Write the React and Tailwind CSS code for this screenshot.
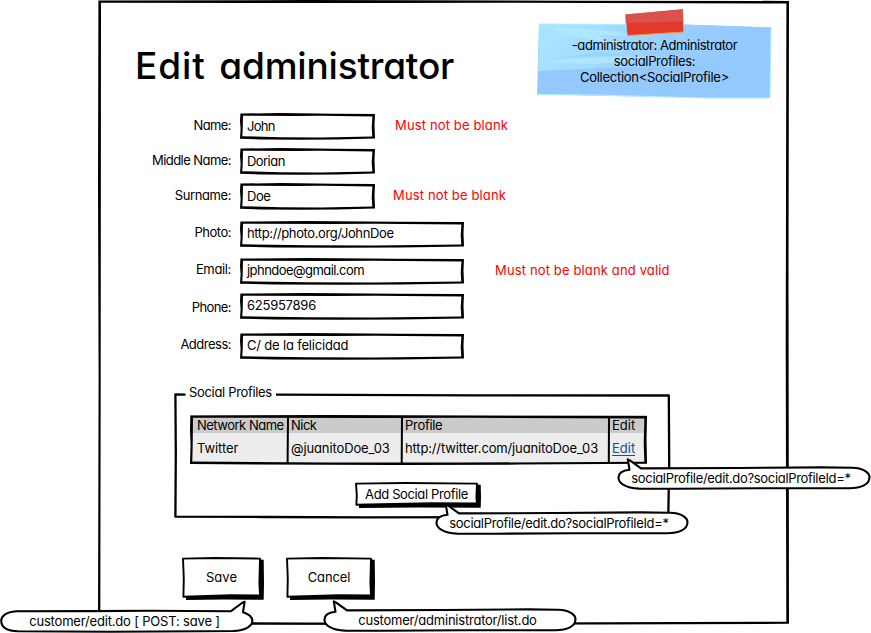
// Hand-drawn rectangle outline: an uneven ring between an outer and an inner edge.
function SketchBorder({ w, h }) {
  const t = 2.7;
  const outer = `M0.4 0.6 L${w * 0.3} 0 L${w * 0.7} 0.7 L${w} 0.9 L${w - 0.5} ${h * 0.45} L${w} ${h - 1.2} L${w * 0.72} ${h - 0.4} L${w * 0.45} ${h} L${w * 0.15} ${h - 0.4} L0 ${h - 1} L0.6 ${h * 0.6} L0 ${h * 0.3} Z`;
  const inner = `M${t + 0.3} ${t + 0.1} L${t} ${h * 0.6} L${t - 0.4} ${h - t - 0.9} L${w * 0.3} ${h - t + 0.2} L${w * 0.6} ${h - t + 0.3} L${w - t} ${h - t - 0.6} L${w - t - 0.6} ${h * 0.55} L${w - t + 0.1} ${t + 0.8} L${w * 0.6} ${t} L${w * 0.4} ${t + 0.3} Z`;
  return (
    <svg className="pointer-events-none absolute left-0 top-0 overflow-visible" width={w} height={h}>
      <path d={outer + ' ' + inner} fill="#000" fillRule="evenodd" />
    </svg>
  );
}

function Field({ label, labelClass, value, valueClass, wide, error, errorClass, className }) {
  return (
    <div className={`flex h-[26px] items-center ${className}`}>
      <div className={`w-[131px] text-right ${labelClass}`}>{label}</div>
      <div className={`relative ml-[9px] flex h-[26px] shrink-0 items-center pl-[7px] ${wide ? 'w-[224px]' : 'w-[135px]'}`}>
        <SketchBorder w={wide ? 224 : 135} h={26.8} />
        <span className={valueClass}>{value}</span>
      </div>
      {error && <div className={`pb-[2px] text-[#ff0000] ${errorClass}`}>{error}</div>}
    </div>
  );
}

function SketchButton({ w, h, children, className, textClass }) {
  return (
    <button className={`relative flex items-center justify-center ${className}`}>
      <svg className="absolute left-0 top-0 overflow-visible" width={w} height={h}>
        <path d={`M4 ${h - 6} L${w - 6} 2.5 L${w - 0.3} 2.7 L${w} ${h * 0.6} L${w - 0.3} ${h - 0.2} L${w * 0.5} ${h - 0.4} L4 ${h} Z`} fill="#000" />
        <path d={`M1 1.6 L${w * 0.4} 1 L${w - 4} 1.6 L${w - 4.6} ${h * 0.6} L${w - 4} ${h - 4.6} L${w * 0.6} ${h - 4.9} L1.4 ${h - 3.3} L1.8 ${h * 0.5} Z`} fill="#fff" stroke="#000" strokeWidth="1.9" strokeLinejoin="round" />
      </svg>
      <span className={`relative ${textClass}`}>{children}</span>
    </button>
  );
}

// Speech bubble whose tail rises from its left or its right end.
function Callout({ tailRight, className, children }) {
  const left = 'M12.5 12.8 L10.8 2.4 L13.2 3.6 L24 11.4 L120 11 L205 10.4 L235 10.8 C248 11.2 253 16.5 252.4 21 C252 27 245 31.2 232 31.2 L140 31.3 L60 31.7 L22 31.6 C8 31 1.7 26 1.5 21 C1.3 16.5 5.5 13.5 12.5 12.8 Z';
  const right = 'M243 12.2 L244.6 1.8 L242 3 L231 11.2 L150 10.7 L90 11.1 L16 11.2 C6 12 1 16.5 1.2 21 C1.5 27.5 8 31 18 31.3 L110 31.8 L200 31.2 L233 31 C246 30.4 252.4 25.8 252.4 20.8 C252.2 16.3 248.5 13.8 243 12.2 Z';
  return (
    <div className={`absolute flex h-[32px] w-[253px] items-center justify-center pt-[10px] whitespace-nowrap ${className}`}>
      <svg className="absolute left-0 top-0 overflow-visible" width="253" height="32">
        <path d={tailRight ? right : left} fill="#fff" stroke="#000" strokeWidth="2.1" strokeLinejoin="round" />
      </svg>
      <span className="relative">{children}</span>
    </div>
  );
}

function StickyNote() {
  return (
    <div className="absolute left-[536px] top-[8px] h-[92px] w-[238px]">
      <svg className="absolute left-0 top-0" width="238" height="92">
        <defs>
          <linearGradient id="paper" x1="0" x2="1" y1="0" y2="0.15">
            <stop offset="0" stopColor="#a9e5ff" />
            <stop offset="0.35" stopColor="#a2dbff" />
            <stop offset="0.6" stopColor="#98ceff" />
            <stop offset="1" stopColor="#92c9ff" />
          </linearGradient>
        </defs>
        <path d="M3 16 L147 16.5 L235 19.5 L234 90 L170 90 L1 86.5 Z" fill="#93c9ff" />
        <path d="M3 16 L147 16.5 L235 19.5 L234.5 57 L180 57 L140 59 L70 60 L2 63 Z" fill="url(#paper)" />
        <path d="M12 20 Q60 18 100 28 L62 27 L72 34 L30 27 Z M8 54 Q60 47 130 49 L60 56 Z" fill="#b4eaff" opacity="0.7" />
        <path d="M30 36 L75 40 L50 43 L88 47 L20 50 L60 45 Z M84 21 L150 26 L96 26 Z" fill="#95cdff" opacity="0.7" />
        <path d="M3 16 L90 16.5 L147 17.5 M1 86.5 L60 87 L170 90 L234 90 L235 19.5" fill="none" stroke="#b5f0ff" strokeWidth="1" />
        <path d="M89.5 6.5 L147 1.2 L147.3 24 L91.5 27.5 Z" fill="#e3382b" />
        <path d="M89.5 6.5 L147 1.2 L147.3 13.5 L89.5 15 Z" fill="#d9534c" />
        <path d="M91.5 27.5 L147.3 24" stroke="#f59340" strokeWidth="1" />
      </svg>
      <div className="relative flex flex-col items-center pt-[29px] pr-[1px] leading-[16px] whitespace-nowrap">
        <div className="tracking-[-0.44px]">-administrator: Administrator</div>
        <div className="tracking-[-0.33px]">socialProfiles:</div>
        <div className="tracking-[-0.28px]">Collection&lt;SocialProfile&gt;</div>
      </div>
    </div>
  );
}

function Cell({ className, children }) {
  return <div className={`flex items-center pl-[3px] ${className}`}>{children}</div>;
}

function SocialProfiles() {
  return (
    <section className="relative ml-[76px] mt-[34px] flex h-[125px] w-[496px] flex-col">
      <svg className="absolute left-0 top-0 overflow-visible" width="496" height="125">
        <path d="M11.5 1.7 L1.4 1.5 L1.8 60 L1.4 123.6 L90 124 L190 124.3 L350 124.2 L494.3 123.8 L495.2 70 L494.8 2.5 L300 2.3 L102 1.7" fill="none" stroke="#000" strokeWidth="2.3" strokeLinejoin="round" />
      </svg>
      <div className="-mt-[9px] pl-[15px] leading-[16px] tracking-[-0.33px]">Social Profiles</div>
      <div className="relative ml-[16px] mt-[15px] grid h-[49px] w-[457px] grid-cols-[98px_114px_207px_38px] grid-rows-[18px_31px] bg-[#ededed]">
        <Cell className="bg-[#cbcbcb] !pl-[7px] pt-[1px] tracking-[-0.5px]">Network Name</Cell>
        <Cell className="bg-[#cbcbcb] pt-[1px] tracking-[-0.5px]">Nick</Cell>
        <Cell className="bg-[#cbcbcb] pt-[1px] tracking-[-0.3px]">Profile</Cell>
        <Cell className="bg-[#cbcbcb] pt-[1px]">Edit</Cell>
        <Cell className="!pl-[7px] pb-[2px] tracking-[-0.1px]">Twitter</Cell>
        <Cell className="pb-[2px] tracking-[-0.12px]">@juanitoDoe_03</Cell>
        <Cell className="pb-[2px] tracking-[-0.15px]">http://twitter.com/juanitoDoe_03</Cell>
        <Cell className="pb-[1px] text-[#10509c]">
          <a className="border-b border-[#10509c] leading-[14px]">Edit</a>
        </Cell>
        <SketchBorder w={457} h={50} />
        <svg className="absolute left-0 top-0" width="457" height="49">
          <path d="M98 1 L97.6 48 M212 1 L211.7 48 M419 1 L418.8 48" stroke="#000" strokeWidth="2" />
        </svg>
      </div>
      <SketchButton w={126} h={26} className="ml-[181px] mt-[18px] h-[26px] w-[126px]" textClass="pr-[3px] pb-[3px] tracking-[-0.37px]">
        Add Social Profile
      </SketchButton>
    </section>
  );
}

export default function App() {
  return (
    <div className="relative h-[633px] w-[871px] overflow-hidden bg-white font-['Inter','Liberation_Sans',sans-serif] text-[13px] leading-[16px] text-black [font-feature-settings:'cv11']">
      <main className="relative ml-[98px] flex h-[625px] w-[691px] flex-col">
        <SketchBorder w={691} h={625} />
        <h1 className="ml-[37px] mt-[42px] h-[48px] text-[37px] leading-[48px] font-medium tracking-[-0.2px] [word-spacing:4px]">
          <span className="tracking-[0.9px]">Edit</span> administrator
        </h1>
        <div className="ml-[2px] mt-[23px] flex flex-col whitespace-nowrap">
          <Field className="" label="Name:" labelClass="tracking-[-0.6px] pb-[2px]" value="John" valueClass="tracking-[-0.75px] pb-[1px]" error="Must not be blank" errorClass="ml-[20px] tracking-[0.14px]" />
          <Field className="mt-[9px]" label="Middle Name:" labelClass="tracking-[-0.55px] pb-[2px]" value="Dorian" valueClass="tracking-[-0.55px] pb-[1px]" />
          <Field className="mt-[9px]" label="Surname:" labelClass="tracking-[-0.4px] pb-[2px]" value="Doe" valueClass="tracking-[-0.5px] pb-[1px]" error="Must not be blank" errorClass="ml-[18px] tracking-[0.14px]" />
          <Field className="mt-[12px]" label="Photo:" labelClass="tracking-[-0.5px] pb-[4px]" value="http://photo.org/JohnDoe" valueClass="tracking-[-0.38px] pb-[2px]" wide />
          <Field className="mt-[11px]" label="Email:" labelClass="tracking-[-0.35px] pb-[4px]" value="jphndoe@gmail.com" valueClass="tracking-[-0.55px] pb-[2px]" wide error="Must not be blank and valid" errorClass="ml-[31px] tracking-[0.14px]" />
          <Field className="mt-[9px]" label="Phone:" labelClass="tracking-[-0.6px] pt-[2px]" value="625957896" valueClass="tracking-[-0.25px] pb-[2px]" wide />
          <Field className="mt-[14px]" label="Address:" labelClass="tracking-[-0.5px] pb-[4px]" value="C/ de la felicidad" valueClass="tracking-[-0.18px] pb-[2px]" wide />
        </div>
        <SocialProfiles />
        <div className="ml-[84px] mt-[39px] flex gap-[22px]">
          <SketchButton w={82} h={43} className="h-[43px] w-[82px]" textClass="pr-[3px] pb-[4px]">Save</SketchButton>
          <SketchButton w={89} h={43} className="h-[43px] w-[89px]" textClass="pr-[3px] pb-[4px] tracking-[-0.1px]">Cancel</SketchButton>
        </div>
      </main>
      <StickyNote />
      <Callout className="left-[617px] top-[457px] pr-[5px] tracking-[-0.32px]">socialProfile/edit.do?socialProfileId=*</Callout>
      <Callout className="left-[435px] top-[502px] pr-[5px] tracking-[-0.32px]">socialProfile/edit.do?socialProfileId=*</Callout>
      <Callout tailRight className="left-0 top-[600px] pr-[4px] tracking-[-0.18px]">customer/edit.do [ POST: save ]</Callout>
      <Callout className="left-[323px] top-[599px] pr-[4px] tracking-[-0.22px]">customer/administrator/list.do</Callout>
    </div>
  );
}
